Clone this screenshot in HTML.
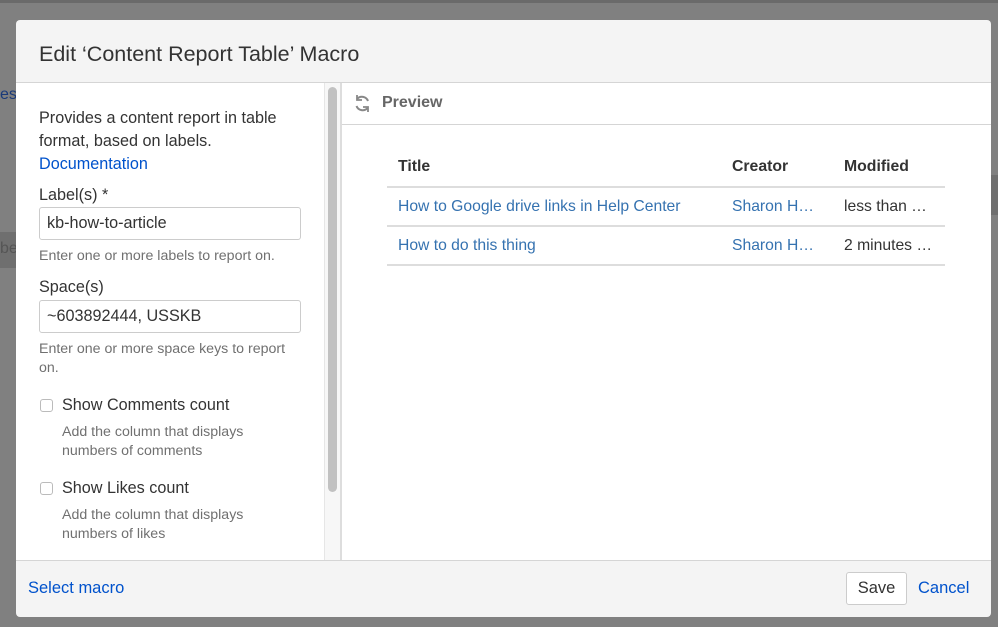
<!DOCTYPE html>
<html><head><meta charset="utf-8"><style>
*{margin:0;padding:0;box-sizing:border-box}
body{width:998px;height:627px;background:#808080;font-family:"Liberation Sans",Arial,sans-serif;position:relative;overflow:hidden;color:#333}
.a{position:absolute;white-space:nowrap}
.dlg{position:absolute;left:16px;top:20px;width:975px;height:597px;background:#f4f4f4;border-radius:4px;overflow:hidden}
.link{color:#0052cc}
.tl{color:#3572b0}
.help{color:#707070;font-size:14.2px}
.inp{position:absolute;left:23px;width:262px;height:33px;border:1px solid #ccc;border-radius:3px;background:#fff;font-size:16.2px;padding:6px 0 0 7px;color:#333}
.cb{position:absolute;left:24px;width:13px;height:13px;border:1px solid #bbb;border-radius:3px;background:#fff}
.hl{position:absolute;left:371px;width:558px;height:2px;background:#ddd}
.t{font-size:16.2px}
</style></head><body>
<div class="a" style="left:0;top:0;width:998px;height:3px;background:#6a6a6a"></div>
<div class="a" style="left:0;top:86px;color:#1a3a7a;font-size:16px">es</div>
<div class="a" style="left:0;top:232px;width:16px;height:36px;background:#6f6f6f"></div>
<div class="a" style="left:0;top:240px;color:#555;font-size:16px">be</div>
<div class="a" style="left:990px;top:175px;width:8px;height:40px;background:#6f6f6f"></div>
<div class="dlg">
  <div class="a" style="left:23px;top:22px;font-size:21.5px;color:#333">Edit ‘Content Report Table’ Macro</div>
  <div class="a" style="left:0;top:62px;width:975px;height:1px;background:#d5d5d5"></div>
  <div class="a" style="left:0;top:63px;width:975px;height:477px;background:#fff"></div>
  <div class="a" style="left:0;top:540px;width:975px;height:1px;background:#d5d5d5"></div>
  <div class="a t" style="left:23px;top:87px;line-height:23px;white-space:normal;width:280px">Provides a content report in table format, based on labels.<br><span class="link">Documentation</span></div>
  <div class="a t" style="left:23px;top:166px">Label(s) *</div>
  <div class="inp" style="top:187px">kb-how-to-article</div>
  <div class="a help" style="left:23px;top:228px">Enter one or more labels to report on.</div>
  <div class="a t" style="left:23px;top:258px">Space(s)</div>
  <div class="inp" style="top:280px">~603892444, USSKB</div>
  <div class="a help" style="left:23px;top:320px;line-height:19px">Enter one or more space keys to report<br>on.</div>
  <div class="cb" style="top:379px"></div>
  <div class="a t" style="left:46px;top:376px">Show Comments count</div>
  <div class="a help" style="left:46px;top:403px;line-height:19px">Add the column that displays<br>numbers of comments</div>
  <div class="cb" style="top:462px"></div>
  <div class="a t" style="left:46px;top:459px">Show Likes count</div>
  <div class="a help" style="left:46px;top:486px;line-height:19px">Add the column that displays<br>numbers of likes</div>
  <div class="a" style="left:308px;top:63px;width:1px;height:477px;background:#e6e6e6"></div>
  <div class="a" style="left:309px;top:63px;width:15px;height:477px;background:#f7f7f7"></div>
  <div class="a" style="left:312px;top:67px;width:9px;height:405px;background:#c1c1c1;border-radius:5px"></div>
  <div class="a" style="left:324px;top:63px;width:2px;height:477px;background:#ddd"></div>
  <svg class="a" style="left:337px;top:74px" width="19" height="19" viewBox="0 0 19 19" fill="none" stroke="#888" stroke-width="2"><path d="M15 7A6.5 6.5 0 0 0 4 5"/><path d="M4 1v5h5" stroke-width="1.8"/><path d="M3.5 12A6.5 6.5 0 0 0 14.5 14"/><path d="M15 18v-5h-5" stroke-width="1.8"/></svg>
  <div class="a" style="left:366px;top:74px;font-size:16px;font-weight:bold;color:#666">Preview</div>
  <div class="a" style="left:326px;top:104px;width:649px;height:1px;background:#d5d5d5"></div>
  <div class="a" style="left:382px;top:138px;font-size:15.8px;font-weight:bold">Title</div>
  <div class="a" style="left:716px;top:138px;font-size:15.8px;font-weight:bold">Creator</div>
  <div class="a" style="left:828px;top:138px;font-size:15.8px;font-weight:bold">Modified</div>
  <div class="hl" style="top:166px"></div>
  <div class="a tl" style="left:382px;top:178px;font-size:15.7px">How to Google drive links in Help Center</div>
  <div class="a tl" style="left:716px;top:178px;font-size:15.7px">Sharon H…</div>
  <div class="a" style="left:828px;top:178px;font-size:15.7px">less than …</div>
  <div class="hl" style="top:205px"></div>
  <div class="a tl" style="left:382px;top:217px;font-size:15.7px">How to do this thing</div>
  <div class="a tl" style="left:716px;top:217px;font-size:15.7px">Sharon H…</div>
  <div class="a" style="left:828px;top:217px;font-size:15.7px">2 minutes …</div>
  <div class="hl" style="top:244px"></div>
  <div class="a link" style="left:12px;top:559px;font-size:16.5px">Select macro</div>
  <div class="a" style="left:830px;top:552px;width:61px;height:33px;border:1px solid #ccc;border-radius:3px;background:#fff;font-size:16.5px;text-align:center;padding-top:6px">Save</div>
  <div class="a link" style="left:902px;top:559px;font-size:16.5px">Cancel</div>
</div>
</body></html>
